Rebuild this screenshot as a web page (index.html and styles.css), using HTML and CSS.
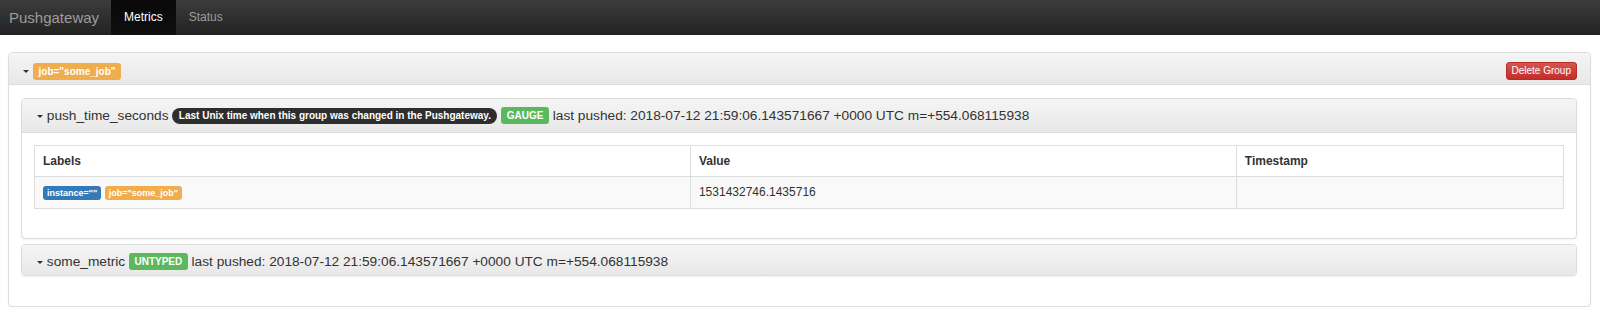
FILE: index.html
```html
<!DOCTYPE html>
<html lang="en">
<head>
    <meta charset="UTF-8">
    <meta name="viewport" content="width=device-width, initial-scale=1.0">
    <title>Pushgateway</title>
    <link rel="stylesheet" href="styles.css">
</head>
<body>
    <nav class="navbar">
        <a class="navbar-brand" href="#">Pushgateway</a>
        <a class="nav-link active" href="#">Metrics</a>
        <a class="nav-link" href="#">Status</a>
    </nav>

    <div class="container">
        <div class="panel group-panel">
            <div class="panel-heading group-heading">
                <span class="caret"></span>
                <span class="label label-warning">job="some_job"</span>
                <button class="btn-danger">Delete Group</button>
            </div>
            <div class="panel-body group-body">
                <!-- metric with help text -->
                <div class="panel metric-panel">
                    <div class="panel-heading metric-heading">
                        <span class="caret"></span> push_time_seconds <span class="help-pill">Last Unix time when this group was changed in the Pushgateway.</span> <span class="label label-success">GAUGE</span> last pushed: 2018-07-12 21:59:06.143571667 +0000 UTC m=+554.068115938
                    </div>
                    <div class="panel-body metric-body">
                        <table class="metric-table">
                            <thead>
                                <tr>
                                    <th class="col-labels">Labels</th>
                                    <th class="col-value">Value</th>
                                    <th>Timestamp</th>
                                </tr>
                            </thead>
                            <tbody>
                                <tr>
                                    <td><span class="label label-sm label-primary">instance=""</span> <span class="label label-sm label-warning">job="some_job"</span></td>
                                    <td>1531432746.1435716</td>
                                    <td></td>
                                </tr>
                            </tbody>
                        </table>
                    </div>
                </div>

                <div class="panel metric-panel collapsed">
                    <div class="panel-heading metric-heading">
                        <span class="caret"></span> some_metric <span class="label label-success">UNTYPED</span> last pushed: 2018-07-12 21:59:06.143571667 +0000 UTC m=+554.068115938
                    </div>
                </div>
            </div>
        </div>
    </div>
</body>
</html>
```

FILE: styles.css
```css
body {
    margin: 0;
    font-family: 'Liberation Sans', Arial, sans-serif;
    font-size: 13.7px;
    color: #333;
    background-color: #fff;
}

/* top bar */
.navbar {
    display: flex;
    height: 35px;
    background: linear-gradient(#3c3c3c, #222);
}

.navbar a {
    text-decoration: none;
    line-height: 35px;
    color: #9d9d9d;
}

.navbar-brand {
    padding: 0 12px 0 9px;
    font-size: 15px;
}

.nav-link {
    padding: 0 13px;
    font-size: 12px;
}

.nav-link.active {
    color: #fff;
    background: linear-gradient(#080808, #0f0f0f);
}

.container {
    padding: 17px 9px 0 8px;
}

/* panels */
.panel {
    background-color: #fff;
    border: 1px solid #ddd;
    border-radius: 4px;
    box-shadow: 0 1px 2px rgba(0, 0, 0, 0.05);
}

.panel-heading {
    background: linear-gradient(#f5f5f5, #e8e8e8);
    border-bottom: 1px solid #ddd;
    border-radius: 3px 3px 0 0;
}

.group-heading {
    display: flex;
    align-items: center;
    height: 18px;
    padding: 9px 13px 4px 14px;
}

.group-heading .caret {
    margin-right: 4px;
}

.group-body {
    padding: 13px 13px 30px 12px;
}

.metric-panel + .metric-panel {
    margin-top: 5px;
}

.metric-heading {
    line-height: 18px;
    padding: 8px 15px 7px 15px;
    white-space: nowrap;
}

.collapsed .metric-heading {
    border-bottom: none;
    border-radius: 3px;
    padding-bottom: 4px;
}

.metric-body {
    padding: 12px 12px 29px 12px;
}

.caret {
    display: inline-block;
    width: 0;
    height: 0;
    vertical-align: middle;
    border-top: 3px solid #333;
    border-left: 3px solid transparent;
    border-right: 3px solid transparent;
}

/* labels */
.label {
    display: inline-block;
    height: 17px;
    line-height: 17px;
    padding: 0 5.5px;
    font-size: 10px;
    font-weight: bold;
    color: #fff;
    border-radius: 3px;
    vertical-align: 1px;
}

.label-warning {
    background-color: #f0ad4e;
}

.label-success {
    background-color: #5cb85c;
}

.label-primary {
    background-color: #337ab7;
}

.label-sm {
    height: 14px;
    line-height: 14px;
    padding: 0 4px;
    font-size: 9px;
    vertical-align: middle;
}

.help-pill {
    display: inline-block;
    height: 16px;
    line-height: 16px;
    padding: 0 6.5px;
    font-size: 10px;
    font-weight: bold;
    color: #fff;
    background-color: #2e2e2e;
    border-radius: 8px;
    vertical-align: 1px;
}

.btn-danger {
    margin-left: auto;
    height: 18px;
    padding: 0 5px;
    font-family: inherit;
    font-size: 10px;
    line-height: 16px;
    color: #fff;
    background: linear-gradient(#d9534f, #c12e2a);
    border: 1px solid #b92c28;
    border-radius: 3px;
    cursor: pointer;
}

/* table */
.metric-table {
    width: 100%;
    border-collapse: collapse;
    font-size: 12px;
    line-height: 14px;
}

.metric-table th,
.metric-table td {
    padding: 8px;
    text-align: left;
    border: 1px solid #ddd;
}

.metric-table td {
    background-color: #f9f9f9;
}

.col-labels {
    width: 42.9%;
}

.col-value {
    width: 35.7%;
}
```
